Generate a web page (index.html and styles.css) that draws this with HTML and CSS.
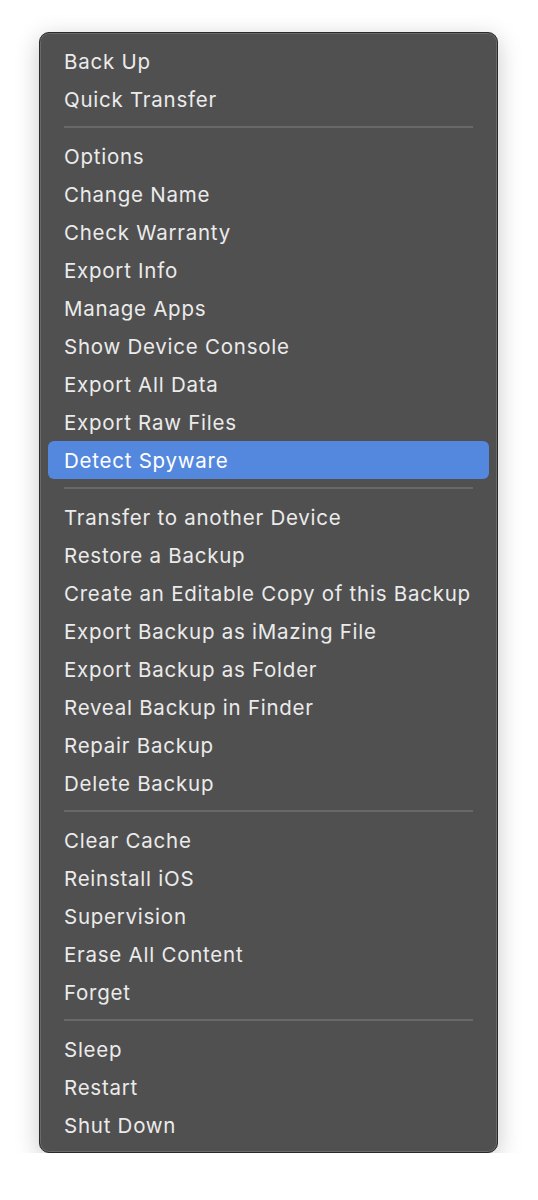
FILE: index.html
```html
<!DOCTYPE html>
<html>
<head>
<meta charset="utf-8">
<link rel="stylesheet" href="styles.css">
</head>
<body>
<div class="menu">
  <div class="item">Back Up</div>
  <div class="item">Quick Transfer</div>
  <div class="sep"></div>
  <div class="item">Options</div>
  <div class="item">Change Name</div>
  <div class="item">Check Warranty</div>
  <div class="item">Export Info</div>
  <div class="item">Manage Apps</div>
  <div class="item">Show Device Console</div>
  <div class="item">Export All Data</div>
  <div class="item">Export Raw Files</div>
  <div class="item active">Detect Spyware</div>
  <div class="sep"></div>
  <div class="item">Transfer to another Device</div>
  <div class="item">Restore a Backup</div>
  <div class="item">Create an Editable Copy of this Backup</div>
  <div class="item">Export Backup as iMazing File</div>
  <div class="item">Export Backup as Folder</div>
  <div class="item">Reveal Backup in Finder</div>
  <div class="item">Repair Backup</div>
  <div class="item">Delete Backup</div>
  <div class="sep"></div>
  <div class="item">Clear Cache</div>
  <div class="item">Reinstall iOS</div>
  <div class="item">Supervision</div>
  <div class="item">Erase All Content</div>
  <div class="item">Forget</div>
  <div class="sep"></div>
  <div class="item">Sleep</div>
  <div class="item">Restart</div>
  <div class="item">Shut Down</div>
</div>
</body>
</html>
```
FILE: styles.css
```css
html, body {
  margin: 0;
  padding: 0;
  background: #ffffff;
}
body {
  padding: 32px 0 0 39px;
  font-family: Inter, "Liberation Sans", sans-serif;
}
.menu {
  width: 459px;
  box-sizing: border-box;
  background: #505050;
  border: 1px solid #2a2a2a;
  border-radius: 10px;
  box-shadow: inset 0 0 0 1px #6a6a6a, 0 6px 24px rgba(0,0,0,0.22);
  padding: 9px 8px 8px 8px;
  display: flex;
  flex-direction: column;
}
.item {
  height: 38px;
  line-height: 40px;
  padding-left: 16px;
  color: #ebebeb;
  font-size: 20.5px;
  letter-spacing: 0.75px;
  border-radius: 6px;
  white-space: nowrap;
}
.item.active {
  background: #5488df;
  color: #ffffff;
}
.sep {
  height: 2px;
  margin: 8px 16px 9px 16px;
  background: #686868;
}
```
